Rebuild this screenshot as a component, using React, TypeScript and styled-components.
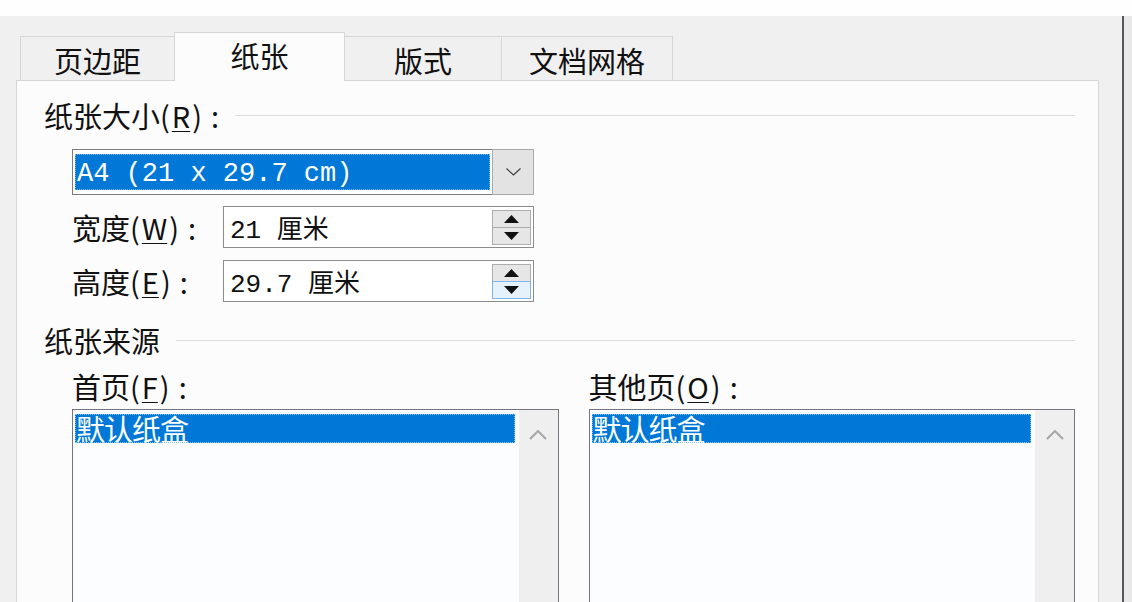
import React from 'react';
import styled, { createGlobalStyle } from 'styled-components';

const GlobalStyle = createGlobalStyle`
  html, body {
    margin: 0;
    padding: 0;
    background: #ffffff;
  }
  body {
    font-family: "Noto Sans CJK SC", "Noto Sans", sans-serif;
    color: #111111;
  }
`;

const Screen = styled.div`
  width: 1132px;
  height: 602px;
  overflow: hidden;
  display: flex;
  flex-direction: column;
  background: #ffffff;
`;

const TopStrip = styled.div`
  height: 16px;
  flex-shrink: 0;
  background: #fefefe;
`;

const Body = styled.div`
  flex: 1;
  display: flex;
  min-height: 0;
`;

const Dialog = styled.div`
  width: 1122px;
  flex-shrink: 0;
  box-sizing: border-box;
  padding: 0 23px 0 16px;
  background: #f0f0f1;
  display: flex;
  flex-direction: column;
`;

const WindowEdge = styled.div`
  width: 2px;
  background: #55565d;
`;

const Beyond = styled.div`
  flex: 1;
  background: #e8e8e9;
`;

const TabRow = styled.div`
  height: 65px;
  flex-shrink: 0;
  display: flex;
  align-items: flex-end;
  padding-left: 4px;
  margin-bottom: -1px;
  position: relative;
  z-index: 1;
`;

const Tab = styled.div<{ $active?: boolean; $w: number }>`
  width: ${({ $w }) => $w}px;
  height: ${({ $active }) => ($active ? 49 : 45)}px;
  box-sizing: border-box;
  margin-left: -1px;
  border: 1px solid #d6d6d8;
  border-bottom: ${({ $active }) => ($active ? 'none' : '1px solid #d6d6d8')};
  background: ${({ $active }) => ($active ? '#fcfcfd' : '#f0f0f1')};
  display: flex;
  align-items: center;
  justify-content: center;
  padding: ${({ $active }) => ($active ? '0 0 4px 0' : '3px 0 0 0')};
  font-size: 29px;
  line-height: 32px;
  color: #111;
  &:first-child {
    margin-left: 0;
  }
`;

const Panel = styled.div`
  flex: 1;
  background: #fcfcfd;
  border: 1px solid #d6d6d8;
  border-bottom: none;
  padding: 16px 23px 0 27px;
  display: flex;
  flex-direction: column;
`;

const GroupTitle = styled.div<{ $top: number }>`
  display: flex;
  align-items: center;
  gap: 16px;
  margin-top: ${({ $top }) => $top}px;
  font-size: 29px;
  line-height: 36px;
`;

const GroupLine = styled.div`
  flex: 1;
  height: 1px;
  margin-top: 1px;
  background: #dcdcde;
`;

const Indent = styled.div`
  margin-left: 28px;
  display: flex;
  flex-direction: column;
`;

const Key = styled.span`
  text-decoration: underline;
  text-underline-offset: 3px;
  text-decoration-thickness: 1px;
  padding: 0 2px;
`;

const Colon = styled.span`
  margin-left: 9px;
`;

const ComboBox = styled.div`
  margin-top: 16px;
  width: 462px;
  height: 46px;
  box-sizing: border-box;
  border: 1px solid #7c7c7e;
  background: #ffffff;
  display: flex;
`;

const ComboValue = styled.div`
  flex: 1;
  margin: 4px 2px 4px 2px;
  background: #0078d7;
  outline: 1px dotted #7fb4e6;
  outline-offset: -1px;
  color: #ffffff;
  display: flex;
  align-items: center;
  padding: 3px 0 0 2px;
  box-sizing: border-box;
  font-family: "Liberation Mono", "Noto Sans CJK SC", monospace;
  font-size: 27px;
  white-space: pre;
`;

const ComboButton = styled.div`
  width: 42px;
  margin: -1px -1px -1px 0;
  box-sizing: border-box;
  border: 1px solid #a9a9ab;
  background: #e3e3e4;
  display: flex;
  align-items: center;
  justify-content: center;
`;

const FieldRow = styled.div<{ $top: number }>`
  display: flex;
  align-items: center;
  margin-top: ${({ $top }) => $top}px;
`;

const FieldLabel = styled.div`
  width: 151px;
  font-size: 29px;
  line-height: 36px;
  white-space: nowrap;
`;

const SpinBox = styled.div`
  width: 311px;
  height: 42px;
  box-sizing: border-box;
  border: 1px solid #8c8c8e;
  background: #ffffff;
  display: flex;
  align-items: center;
`;

const SpinText = styled.div`
  flex: 1;
  padding-left: 6px;
  font-family: "Liberation Mono", "Noto Sans CJK SC", monospace;
  font-size: 26px;
  white-space: pre;
  color: #111;
`;

const SpinButtons = styled.div`
  width: 39px;
  margin-right: 2px;
  display: flex;
  flex-direction: column;
`;

const SpinButton = styled.div<{ $hover?: boolean }>`
  height: 18px;
  box-sizing: border-box;
  border: 1px solid ${({ $hover }) => ($hover ? '#7eb4ea' : '#adadaf')};
  background: ${({ $hover }) => ($hover ? '#e5f1fb' : '#e6e6e7')};
  display: flex;
  align-items: center;
  justify-content: center;
  & + & {
    margin-top: -1px;
  }
`;

const SourceGrid = styled.div`
  display: grid;
  grid-template-columns: 1fr 1fr;
  column-gap: 30px;
  margin-top: 10px;
`;

const SourceColumn = styled.div`
  display: flex;
  flex-direction: column;
`;

const SourceLabel = styled.div`
  font-size: 29px;
  line-height: 36px;
`;

const ListBox = styled.div`
  margin-top: 5px;
  height: 240px;
  box-sizing: border-box;
  border: 1px solid #75757f;
  background: #fcfdfe;
  display: flex;
`;

const ListItems = styled.div`
  flex: 1;
  padding: 4px 4px 0 2px;
`;

const ListItem = styled.div<{ $selected?: boolean }>`
  height: 29px;
  line-height: 29px;
  font-size: 29px;
  letter-spacing: -1px;
  background: ${({ $selected }) => ($selected ? '#0078d7' : 'transparent')};
  color: ${({ $selected }) => ($selected ? '#ffffff' : '#111')};
  outline: ${({ $selected }) => ($selected ? '1px dotted #8cc0ee' : 'none')};
  outline-offset: -1px;
  padding-left: 1px;
`;

const ScrollTrack = styled.div`
  width: 39px;
  background: #efeff0;
  display: flex;
  justify-content: center;
  padding-top: 20px;
  box-sizing: border-box;
`;

const Chevron = ({ up }: { up?: boolean }) =>
  up ? (
    <svg width="18" height="10" viewBox="0 0 18 10">
      <path d="M1 9 L9 1 L17 9" fill="none" stroke="#a6a6a8" strokeWidth={2} />
    </svg>
  ) : (
    <svg width="15" height="8" viewBox="0 0 15 8">
      <path d="M0.5 0.5 L7.5 7 L14.5 0.5" fill="none" stroke="#3a3a3a" strokeWidth={1.1} />
    </svg>
  );

const Triangle = ({ up }: { up?: boolean }) => (
  <svg width="15" height="8" viewBox="0 0 15 8">
    <path d={up ? 'M0 8 L7.5 0 L15 8 Z' : 'M0 0 L15 0 L7.5 8 Z'} fill="#111" />
  </svg>
);

const Spinner = ({ hoverDown }: { hoverDown?: boolean }) => (
  <SpinButtons>
    <SpinButton>
      <Triangle up />
    </SpinButton>
    <SpinButton $hover={hoverDown}>
      <Triangle />
    </SpinButton>
  </SpinButtons>
);

const PaperList = () => (
  <ListBox>
    <ListItems>
      <ListItem $selected>默认纸盒</ListItem>
    </ListItems>
    <ScrollTrack>
      <Chevron up />
    </ScrollTrack>
  </ListBox>
);

const tabs = [
  { label: '页边距', w: 155 },
  { label: '纸张', w: 171, active: true },
  { label: '版式', w: 158 },
  { label: '文档网格', w: 172 },
];

export default function App() {
  return (
    <>
      <GlobalStyle />
      <Screen>
        <TopStrip />
        <Body>
          <Dialog>
            <TabRow>
              {tabs.map((t) => (
                <Tab key={t.label} $w={t.w} $active={t.active}>
                  {t.label}
                </Tab>
              ))}
            </TabRow>
            <Panel>
              <GroupTitle $top={0}>
                <span>
                  纸张大小(<Key>R</Key>)<Colon>:</Colon>
                </span>
                <GroupLine />
              </GroupTitle>
              <Indent>
                <ComboBox>
                  <ComboValue>A4 (21 x 29.7 cm)</ComboValue>
                  <ComboButton>
                    <Chevron />
                  </ComboButton>
                </ComboBox>
                <FieldRow $top={11}>
                  <FieldLabel>
                    宽度(<Key>W</Key>)<Colon>:</Colon>
                  </FieldLabel>
                  <SpinBox>
                    <SpinText>21 厘米</SpinText>
                    <Spinner />
                  </SpinBox>
                </FieldRow>
                <FieldRow $top={12}>
                  <FieldLabel>
                    高度(<Key>E</Key>)<Colon>:</Colon>
                  </FieldLabel>
                  <SpinBox>
                    <SpinText>29.7 厘米</SpinText>
                    <Spinner hoverDown />
                  </SpinBox>
                </FieldRow>
              </Indent>
              <GroupTitle $top={20}>
                <span>纸张来源</span>
                <GroupLine />
              </GroupTitle>
              <Indent>
                <SourceGrid>
                  <SourceColumn>
                    <SourceLabel>
                      首页(<Key>F</Key>)<Colon>:</Colon>
                    </SourceLabel>
                    <PaperList />
                  </SourceColumn>
                  <SourceColumn>
                    <SourceLabel>
                      其他页(<Key>O</Key>)<Colon>:</Colon>
                    </SourceLabel>
                    <PaperList />
                  </SourceColumn>
                </SourceGrid>
              </Indent>
            </Panel>
          </Dialog>
          <WindowEdge />
          <Beyond />
        </Body>
      </Screen>
    </>
  );
}
